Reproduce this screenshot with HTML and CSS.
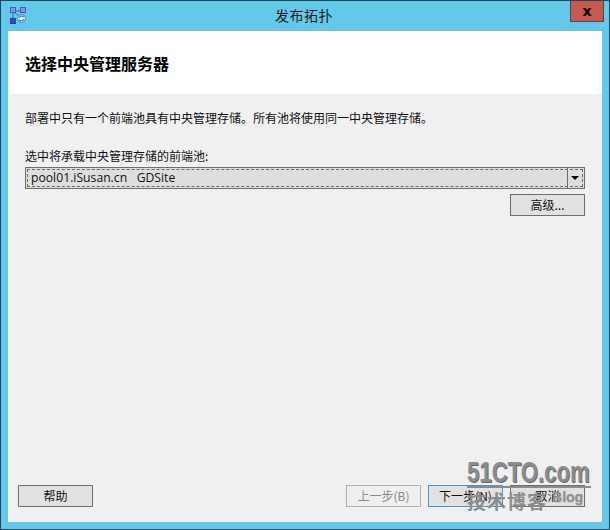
FILE: index.html
```html
<!DOCTYPE html>
<html lang="zh-CN">
  <head>
    <meta charset="UTF-8" />
    <title>发布拓扑</title>
    <link rel="stylesheet" href="styles.css">
  </head>
  <body>
    <div class="window">
      <div class="titlebar">
        <svg class="app-icon" width="16" height="17" viewBox="0 0 16 17">
          <path d="M3 4 L13 4 M3 4 L3 13 M3 4 L12 12" stroke="#3f62b8" stroke-width="1" fill="none" />
          <rect x="0.5" y="0.5" width="5" height="5" fill="#7d9be0" stroke="#3d5fb5" />
          <rect x="10.5" y="0.5" width="5" height="5" fill="#7d9be0" stroke="#3d5fb5" />
          <rect x="0.5" y="11.5" width="5" height="5" fill="#2f50ad" stroke="#2a4698" />
          <circle cx="11.5" cy="11.5" r="4" fill="#eaf6fb" stroke="#3d7fc4" />
          <path d="M9 11 A3 3 0 0 1 14 10 M14 12 A3 3 0 0 1 9 13" stroke="#2f8fd0" stroke-width="1.3" fill="none" />
        </svg>
        <span class="title">发布拓扑</span>
        <div class="close"><span>x</span></div>
      </div>
      <div class="client">
        <div class="header">选择中央管理服务器</div>
        <div class="content">
          <p class="info">部署中只有一个前端池具有中央管理存储。所有池将使用同一中央管理存储。</p>
          <label class="field-label">选中将承载中央管理存储的前端池:</label>
          <div class="combo">
            <div class="combo-focus">
              <div class="combo-value">pool01.iSusan.cn&nbsp;&nbsp; GDSite</div>
              <div class="combo-arrow"><i></i></div>
            </div>
          </div>
          <div class="advanced-row">
            <button class="btn">高级...</button>
          </div>
        </div>
        <div class="footer">
          <button class="btn">帮助</button>
          <div class="footer-right">
            <button class="btn disabled">上一步(B)</button>
            <button class="btn default">下一步(N)</button>
            <button class="btn">取消</button>
          </div>
        </div>
      </div>
      <div class="watermark">
        <div class="wm-top"><span>51CTO.com</span></div>
        <div class="wm-bottom">技术博客<span>Blog</span></div>
      </div>
    </div>
  </body>
</html>
```

FILE: styles.css
```css
html,
body {
  margin: 0;
  height: 100%;
  overflow: hidden;
}

body {
  font-family: "Noto Sans CJK SC", "Open Sans", sans-serif;
  font-size: 12px;
  color: #111;
}

.window {
  position: relative;
  box-sizing: border-box;
  width: 610px;
  height: 530px;
  display: flex;
  flex-direction: column;
  background: #64c8e8;
  border: 1px solid #1c4a5e;
}

/* Title bar */
.titlebar {
  position: relative;
  height: 29px;
  flex-shrink: 0;
  display: flex;
  align-items: flex-start;
  justify-content: center;
}

.app-icon {
  position: absolute;
  left: 9px;
  top: 6px;
}

.title {
  margin-top: 4px;
  margin-right: 2px;
  font-size: 14px;
  line-height: 20px;
  letter-spacing: 0.5px;
  color: #1a1a1a;
}

.close {
  position: absolute;
  right: 5px;
  top: 0;
  box-sizing: border-box;
  width: 34px;
  height: 21px;
  display: flex;
  align-items: center;
  justify-content: center;
  background: #c75a50;
  border: 1px solid #4f4a55;
  border-top: none;
}

.close span {
  font-family: "DejaVu Sans", sans-serif;
  font-size: 14px;
  font-weight: 700;
  line-height: 16px;
  color: #000;
}

/* Client area */
.client {
  flex: 1;
  margin: 0 7px 7px 7px;
  display: flex;
  flex-direction: column;
  background: #f0f0f0;
  border-top: 1px solid #8fb4c4;
  min-height: 0;
}

.header {
  height: 63px;
  padding-left: 17px;
  display: flex;
  align-items: center;
  background: #fff;
  font-size: 16px;
  font-weight: 700;
  color: #000;
}

.content {
  flex: 1;
  padding: 15px 17px 0 17px;
}

.info {
  margin: 0;
  font-size: 12px;
  line-height: 18px;
}

.field-label {
  display: block;
  margin-top: 20px;
  font-size: 12px;
  line-height: 18px;
}

.combo {
  box-sizing: border-box;
  height: 22px;
  margin-top: 2px;
  padding: 1px;
  background: #dedede;
  border: 1px solid #6e6e6e;
}

.combo-focus {
  box-sizing: border-box;
  height: 18px;
  display: flex;
  border: 1px dashed #6a6a6a;
}

.combo-value {
  flex: 1;
  padding-left: 3px;
  font-family: "Open Sans", sans-serif;
  font-size: 12.2px;
  line-height: 16px;
  color: #111;
}

.combo-arrow {
  box-sizing: border-box;
  width: 15px;
  margin: -2px 0;
  display: flex;
  align-items: center;
  justify-content: center;
  border-left: 1px solid #6e6e6e;
}

.combo-arrow i {
  width: 0;
  height: 0;
  border-left: 4px solid transparent;
  border-right: 4px solid transparent;
  border-top: 4px solid #000;
}

.advanced-row {
  display: flex;
  justify-content: flex-end;
  margin-top: 5px;
}

/* Buttons */
.btn {
  box-sizing: border-box;
  width: 75px;
  height: 22px;
  padding: 0;
  background: #e1e1e1;
  border: 1px solid #6e6e6e;
  font-family: "Noto Sans CJK SC", sans-serif;
  font-size: 12px;
  line-height: 18px;
  color: #111;
}

.btn.disabled {
  background: #efefef;
  border-color: #adadad;
  color: #8a8a8a;
}

.btn.default {
  border-color: #3d9ad8;
}

.footer {
  display: flex;
  justify-content: space-between;
  padding: 0 17px 15px 10px;
}

.footer-right {
  display: flex;
  gap: 7px;
}

/* Watermark sits on top of the buttons */
.watermark {
  position: absolute;
  left: 466px;
  top: 457px;
  width: 124px;
  color: #8c8c8c;
}

.wm-top {
  height: 28px;
  border-bottom: 2px solid #8c8c8c;
  font-family: "Liberation Sans", sans-serif;
  font-size: 27px;
  font-weight: 700;
  line-height: 28px;
  white-space: nowrap;
  text-shadow: 1px 1px 0 #666;
}

.wm-top span {
  display: inline-block;
  transform: scale(0.82, 1.12);
  transform-origin: left center;
}

.wm-bottom {
  display: flex;
  align-items: flex-start;
  margin-top: 1px;
  font-size: 19px;
  font-weight: 700;
  line-height: 24px;
  letter-spacing: 1px;
  white-space: nowrap;
}

.wm-bottom span {
  margin-left: 5px;
  font-family: "Liberation Sans", sans-serif;
  font-size: 14px;
  line-height: 16px;
  letter-spacing: 0;
  text-shadow: 1px 1px 0 #ccc;
}
```
